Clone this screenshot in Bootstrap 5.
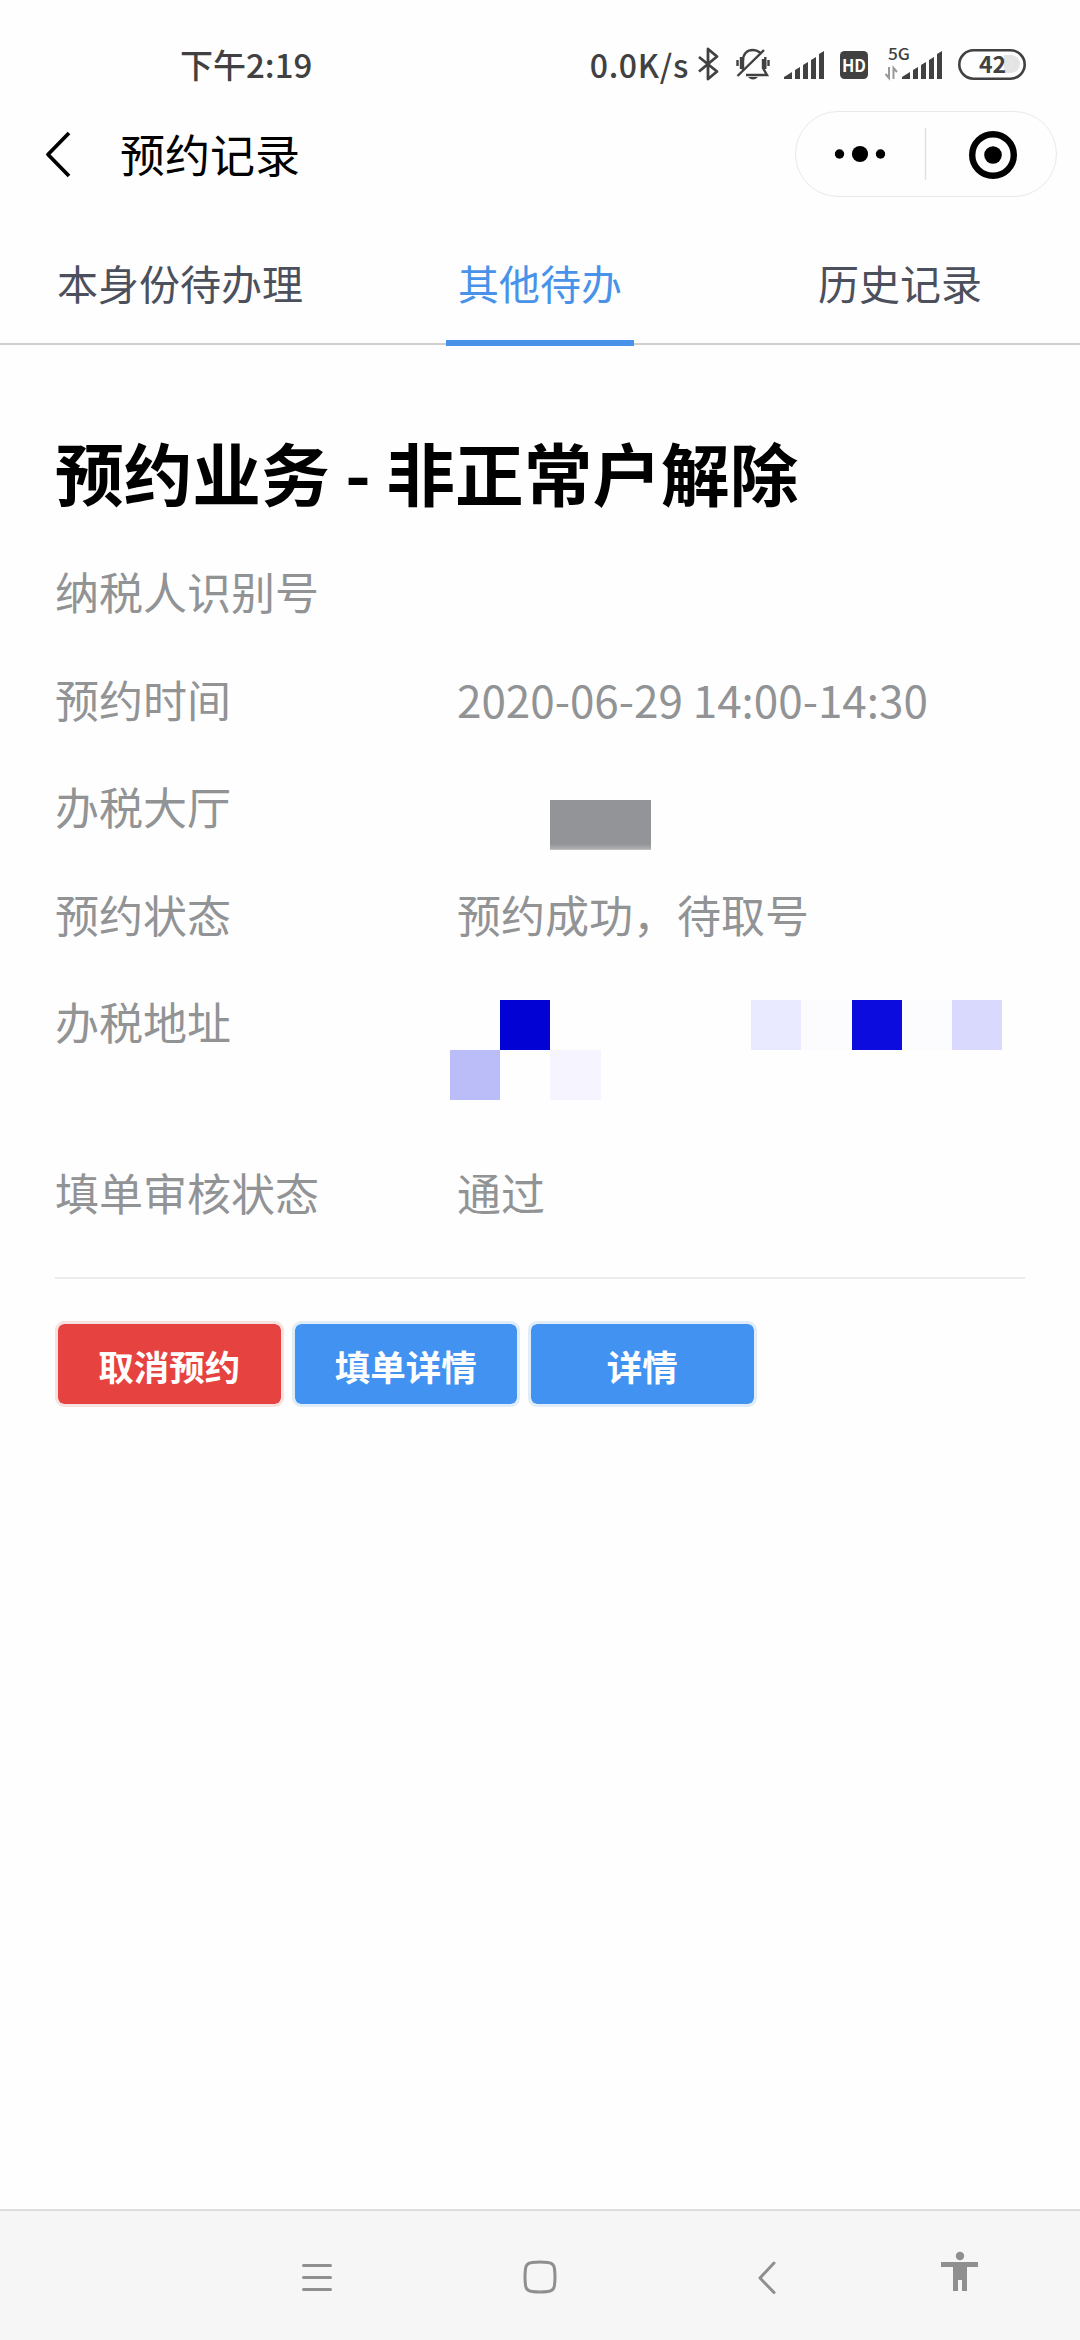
<!DOCTYPE html>
<html lang="zh-CN">
<head>
<meta charset="utf-8">
<meta name="viewport" content="width=device-width, initial-scale=1">
<title>预约记录</title>
<link href="https://cdn.jsdelivr.net/npm/bootstrap@5.3.0/dist/css/bootstrap.min.css" rel="stylesheet">
<style>
  body { font-family: "Noto Sans CJK SC", "Noto Sans", sans-serif; background: #fefefe; color: #000; min-height: 2340px; }
  svg { display: block; flex: none; }
  .status-bar { height: 100px; padding: 28px 54px 0 180px; color: #414141; font-weight: 500; }
  .clock { font-size: 33px; line-height: 48px; }
  .speed { font-size: 32px; line-height: 48px; letter-spacing: .7px; margin-right: 9px; }
  .bars { margin-left: 14px; }
  .gap-icon { margin-left: 15px; }
  .title-bar { height: 107px; padding: 0 23px 0 44px; }
  .page-title { font-size: 45px; line-height: 64px; margin-left: 49px; }
  .capsule { width: 262px; height: 86px; border: 1.5px solid #e9e9e9; }
  .tab-strip { height: 138px; border-bottom: 2px solid #cfcfcf; font-size: 41px; line-height: 60px; }
  .tab-strip .nav-link { color: #4c505c; padding: 45px 0 0; height: 138px; position: relative; }
  .tab-strip .nav-link.active { color: #4892e9; }
  .tab-strip .nav-link.active::after { content: ""; position: absolute; left: 50%; bottom: -1px; width: 188px; height: 6px; margin-left: -94px; background: #4892e9; }
  .record { padding: 76px 55px 0; }
  .record-title { font-size: 68.7px; line-height: 100px; font-weight: 700; margin-bottom: 17px; white-space: nowrap; }
  .field { height: 107.5px; font-size: 44px; line-height: 107.5px; color: #919395; }
  .field-tall { height: 170.5px; }
  .field dt { width: 402px; font-weight: 400; flex: none; }
  .hall-mask { width: 101px; height: 50px; margin: 47px 0 0 93px; background: linear-gradient(#929497 88%, #a9abad 97%, #c4c5c6); }
  .mosaic { display: grid; grid-template-columns: repeat(11, 50.2px); grid-auto-rows: 50px; margin: 32px 0 0 -7px; }
  .m-deep { background: #0202d4; } .m-deep2 { background: #0c0cdf; }
  .m-mid { background: #bbbdf9; } .m-soft { background: #d9d8fd; } .m-pale { background: #e9eaff; }
  .m-faint { background: #f6f5ff; } .m-trace { background: #fcfcff; }
  .rule { margin: 31px 0 42px; border: 0; border-top: 2px solid #ebebeb; opacity: 1; }
  .act { width: 228.5px; height: 86px; border: 3px solid #e0ecf7; border-radius: 9px; font-size: 35.5px; font-weight: 700; line-height: 52px; padding: 16px 0 12px; color: #fff; background: #4292f2; background-clip: padding-box; }
  .act-red { background-color: #e64340; border-color: #f8e2e1; }
  .act:hover { color: #fff; }
  .sys-nav { height: 131px; background: #f6f6f6; border-top: 2px solid #dcdddd; }
</style>
<script src="https://cdn.jsdelivr.net/npm/bootstrap@5.3.0/dist/js/bootstrap.bundle.min.js"></script>
</head>
<body class="d-flex flex-column">
<header>
  <div class="status-bar d-flex justify-content-between align-items-center">
    <span class="clock">下午2:19</span>
    <div class="d-flex align-items-center">
      <span class="speed">0.0K/s</span>
      <!-- Bluetooth -->
      <svg width="22" height="36" viewBox="0 0 22 36" fill="none" stroke="#414141" stroke-width="2.8" stroke-linejoin="round"><path d="M1 11 19 25.500 10 33V3l9 7.500L1 25.500"/></svg>
      <!-- Muted bell -->
      <svg class="ms-3" width="34" height="36" viewBox="0 0 34 36" fill="none" stroke="#414141" stroke-width="2.400"><path d="M7 24V15C7 8 11 4 17 4c3 0 5 1 7 2.500M27 13v9l4 7H10M1.500 14v6M5 11v12M32.500 14v6M29.300 11v12M1.500 30 28 4"/><path d="M12 31h10q-5 5-10 0z" fill="#414141" stroke="none"/></svg>
      <!-- Signal -->
      <svg class="bars" width="41" height="36" viewBox="0 0 41 36" fill="#414141"><path d="M0 33v-2l8-5v7zM11 24l5-3v12h-5zM19 19l5-3v17h-5zM27 14l5-3v22h-5zM35 8l5-3v28h-5z"/></svg>
      <svg class="gap-icon" width="28" height="36" viewBox="0 0 28 36"><rect y="5" width="28" height="28" rx="4.500" fill="#414141"/><text x="14" y="25.500" text-anchor="middle" font-size="17" font-weight="700" fill="#fff" font-family="Noto Sans CJK SC, sans-serif" textLength="24" lengthAdjust="spacingAndGlyphs">HD</text></svg>
      <!-- 5G signal -->
      <svg class="gap-icon" width="60" height="48" viewBox="-1 -6 60 48" fill="#414141"><text x="4" y="13.500" font-size="15.500" font-weight="500" font-family="Noto Sans CJK SC, sans-serif" textLength="22" lengthAdjust="spacingAndGlyphs">5G</text><path d="M5 21v11L1.500 28M9.500 33V22l3.500 4" fill="none" stroke="#999" stroke-width="2"/><path d="M18 33v-2l8-5v7zM29 24l5-3v12h-5zM37 19l5-3v17h-5zM45 14l5-3v22h-5zM53 8l5-3v28h-5z"/></svg>
      <!-- Battery -->
      <svg class="gap-icon" width="68" height="36" viewBox="0 0 68 36"><path d="M46 9h7a9 9 0 0 1 0 18h-7z" fill="#e4e4e4"/><rect x="1.300" y="4.300" width="65.400" height="28.400" rx="14.200" fill="none" stroke="#414141" stroke-width="2.600"/><text x="34.500" y="27" text-anchor="middle" font-size="23" font-weight="700" fill="#414141" font-family="Noto Sans CJK SC, sans-serif">42</text></svg>
    </div>
  </div>
  <div class="title-bar d-flex align-items-center">
    <svg width="27" height="48" viewBox="0 0 27 48" fill="none" stroke="#000" stroke-width="3.800" stroke-linejoin="round"><path d="M25 3 4 24.500 25 46"/></svg>
    <h1 class="page-title fw-normal mb-0">预约记录</h1>
    <div class="capsule rounded-pill ms-auto d-flex align-items-center justify-content-center">
      <svg width="260" height="84" viewBox="0 0 260 84"><circle cx="43.500" cy="42" r="4.700"/><circle cx="64" cy="42" r="8.100"/><circle cx="84.500" cy="42" r="4.700"/><path d="M129.500 16v52" stroke="#e1e1e1" stroke-width="1.500"/><circle cx="197" cy="43" r="20.800" fill="none" stroke="#000" stroke-width="6.400"/><circle cx="197" cy="43" r="8.800"/></svg>
    </div>
  </div>
  <nav class="tab-strip nav row g-0 text-center">
    <a class="nav-link col-4" href="#">本身份待办理</a>
    <a class="nav-link col-4 active" href="#">其他待办</a>
    <a class="nav-link col-4" href="#">历史记录</a>
  </nav>
</header>
<main class="record flex-grow-1">
  <h2 class="record-title">预约业务 - 非正常户解除</h2>
  <dl class="mb-0">
    <div class="field d-flex"><dt>纳税人识别号</dt><dd class="mb-0"></dd></div>
    <div class="field d-flex"><dt>预约时间</dt><dd class="mb-0">2020-06-29 14:00-14:30</dd></div>
    <div class="field d-flex"><dt>办税大厅</dt><dd class="mb-0"><div class="hall-mask"></div></dd></div>
    <div class="field d-flex"><dt>预约状态</dt><dd class="mb-0">预约成功，待取号</dd></div>
    <div class="field field-tall d-flex"><dt>办税地址</dt><dd class="mb-0"><div class="mosaic">
      <i></i><i class="m-deep"></i><i></i><i></i><i></i><i></i><i class="m-pale"></i><i class="m-trace"></i><i class="m-deep2"></i><i class="m-trace"></i><i class="m-soft"></i>
      <i class="m-mid"></i><i></i><i class="m-faint"></i>
    </div></dd></div>
    <div class="field d-flex"><dt>填单审核状态</dt><dd class="mb-0">通过</dd></div>
  </dl>
  <hr class="rule">
  <div class="d-flex gap-2">
    <button class="btn act act-red" type="button">取消预约</button>
    <button class="btn act" type="button">填单详情</button>
    <button class="btn act" type="button">详情</button>
  </div>
</main>
<footer class="sys-nav">
  <svg width="1080" height="129" viewBox="0 0 1080 129" fill="none" stroke="#8f8f8f" stroke-width="3" stroke-linecap="round" stroke-linejoin="round">
    <path d="M303.500 54.500h27M303.500 66.500h27M303.500 78.500h27"/>
    <path d="M532 51.500q8-1 16 0 6 .5 6.500 6.500 1 8 0 16-.5 6-6.500 6.500-8 1-16 0-6-.5-6.500-6.500-1-8 0-16 .5-6 6.500-6.500z"/>
    <path d="M774 52 760 67l14 14.500"/>
    <g fill="#8f8f8f" stroke="none"><circle cx="960" cy="45" r="4.200"/><path d="M941 51h37v5h-11v24h-5V69h-4v11h-5V56h-12z"/></g>
  </svg>
</footer>
</body>
</html>
